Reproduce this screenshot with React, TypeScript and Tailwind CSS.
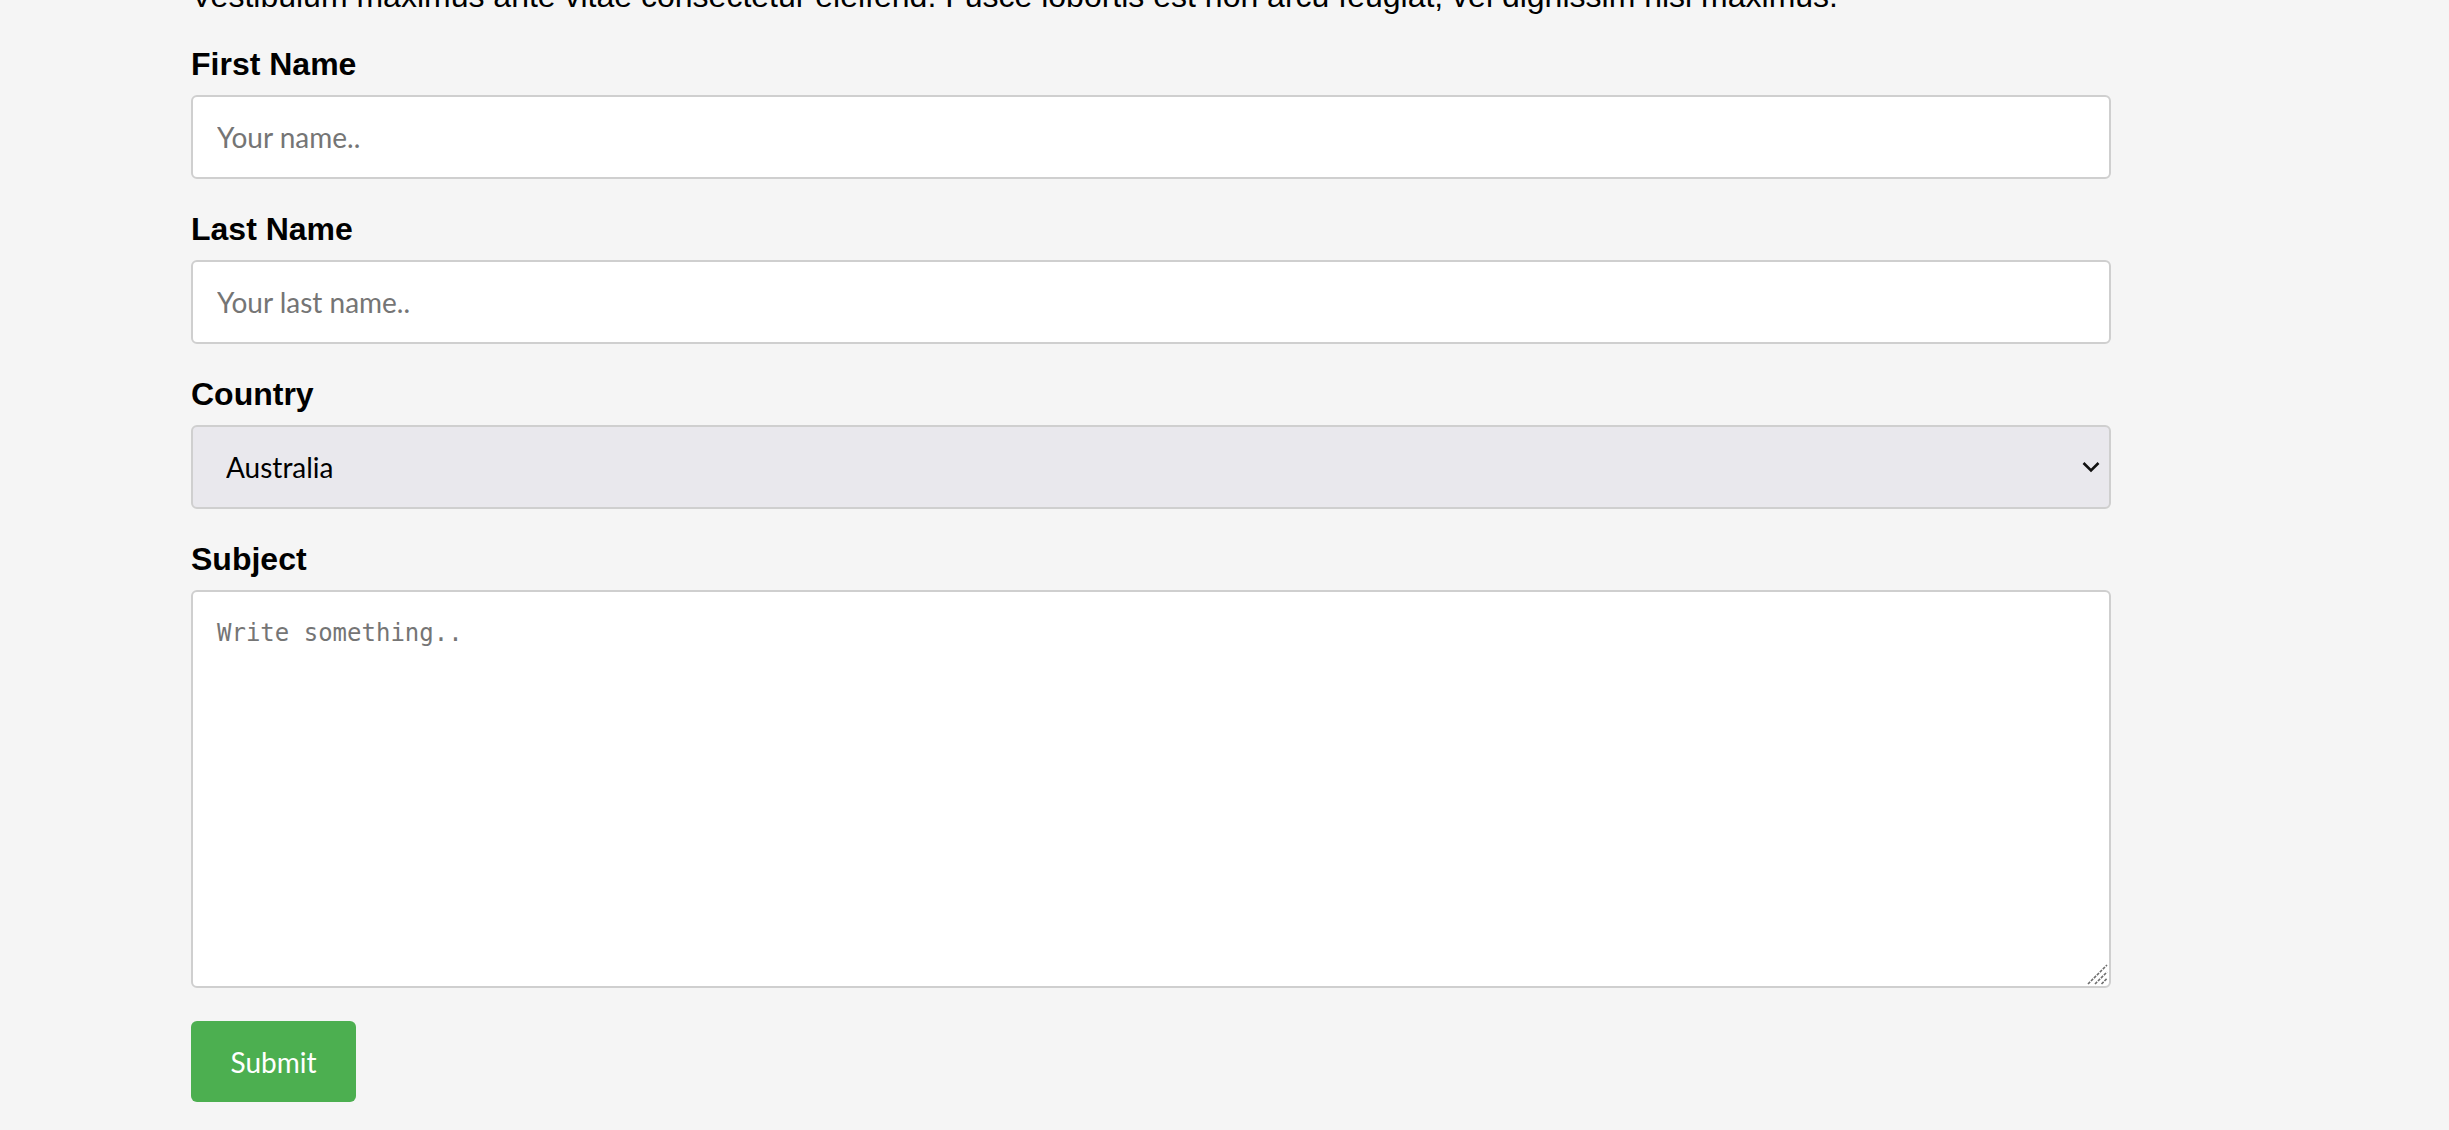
import { useState } from 'react';

const COUNTRIES = ['Australia', 'Canada', 'USA'];

const labelClass =
  "block text-[32px] leading-[36px] font-bold text-black font-['Liberation_Sans',Arial,sans-serif] mb-[13px]";

const fieldClass =
  "block w-full h-[84px] px-[24px] bg-white border-2 border-[#cfcfcf] rounded-[6px] text-[28px] text-black font-['Lato',sans-serif] placeholder:text-[#757575] focus:outline-none mb-[32px]";

export default function App() {
  const [firstName, setFirstName] = useState('');
  const [lastName, setLastName] = useState('');
  const [country, setCountry] = useState('Australia');
  const [subject, setSubject] = useState('');

  return (
    <div className="min-h-screen bg-[#f5f5f5] overflow-hidden">
      <div className="-mt-[22px] ml-[191px] w-[1920px]">
        <p className="text-[32px] leading-[36px] text-black font-['Liberation_Sans',Arial,sans-serif] mb-[32px] whitespace-nowrap">
          Vestibulum maximus ante vitae consectetur eleifend. Fusce lobortis est non arcu feugiat, vel
          dignissim nisi maximus.
        </p>

        <form onSubmit={(e) => e.preventDefault()}>
          {/* First name */}
          <label htmlFor="fname" className={labelClass}>
            First Name
          </label>
          <input
            id="fname"
            type="text"
            value={firstName}
            onChange={(e) => setFirstName(e.target.value)}
            placeholder="Your name.."
            className={fieldClass}
          />

          {/* Last name */}
          <label htmlFor="lname" className={labelClass}>
            Last Name
          </label>
          <input
            id="lname"
            type="text"
            value={lastName}
            onChange={(e) => setLastName(e.target.value)}
            placeholder="Your last name.."
            className={fieldClass}
          />

          {/* Country */}
          <label htmlFor="country" className={labelClass}>
            Country
          </label>
          <div className="relative mb-[32px]">
            <select
              id="country"
              value={country}
              onChange={(e) => setCountry(e.target.value)}
              className="block w-full h-[84px] pl-[33px] pr-[48px] bg-[#e9e8ed] border-2 border-[#cfcfcf] rounded-[6px] text-[28px] text-black font-['Lato',sans-serif] appearance-none focus:outline-none"
            >
              {COUNTRIES.map((c) => (
                <option key={c} value={c}>
                  {c}
                </option>
              ))}
            </select>
            <svg
              className="absolute right-[11px] top-[36px] pointer-events-none"
              width="18"
              height="12"
              viewBox="0 0 18 12"
              fill="none"
            >
              <path d="M1.5 2L9 9.5L16.5 2" stroke="#111" strokeWidth="2.6" />
            </svg>
          </div>

          {/* Subject */}
          <label htmlFor="subject" className={labelClass}>
            Subject
          </label>
          <div className="relative mb-[33px]">
            <textarea
              id="subject"
              value={subject}
              onChange={(e) => setSubject(e.target.value)}
              placeholder="Write something.."
              className="block w-full h-[398px] pl-[24px] pr-[24px] pt-[27px] bg-white border-2 border-[#cfcfcf] rounded-[6px] text-[24px] leading-[28px] text-black font-['DejaVu_Sans_Mono',monospace] placeholder:text-[#757575] focus:outline-none resize-none"
            />
            {/* resize grip */}
            <svg
              className="absolute right-[3px] bottom-[3px] pointer-events-none"
              width="21"
              height="21"
              viewBox="0 0 21 21"
              fill="none"
            >
              <path
                d="M1 20L20 1M8 20L20 8M14.5 20L20 14.5"
                stroke="#6e6e6e"
                strokeWidth="1.6"
                strokeDasharray="3 1.2"
              />
            </svg>
          </div>

          <button
            type="submit"
            className="block w-[165px] h-[81px] bg-[#4caf50] hover:bg-[#45a049] rounded-[6px] text-[28px] text-white font-['Lato',sans-serif] cursor-pointer"
          >
            Submit
          </button>
        </form>
      </div>
    </div>
  );
}
